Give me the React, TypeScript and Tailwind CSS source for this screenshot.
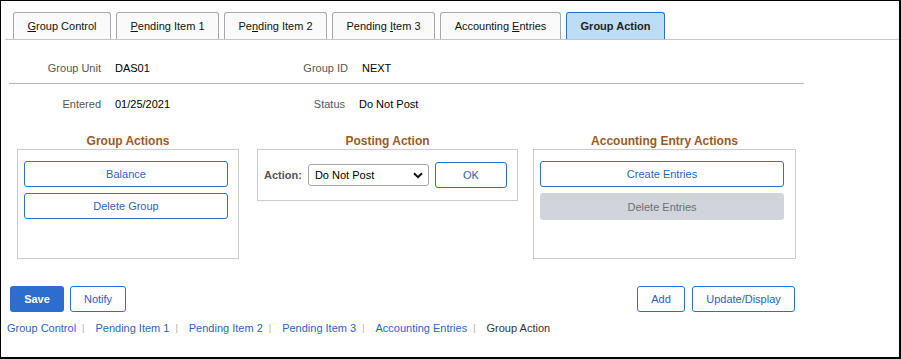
import { FC, ReactNode } from "react";

const tabs: { label: ReactNode; width: string; active?: boolean }[] = [
  { label: <><u>G</u>roup Control</>, width: "w-[98px]" },
  { label: <><u>P</u>ending Item 1</>, width: "w-[103px]" },
  { label: <>Pe<u>n</u>ding Item 2</>, width: "w-[103px]" },
  { label: <>Pending <u>I</u>tem 3</>, width: "w-[103px]" },
  { label: <>Accounting <u>E</u>ntries</>, width: "w-[121px]" },
  { label: <>Group Action</>, width: "w-[99px]", active: true },
];

const links = ["Group Control", "Pending Item 1", "Pending Item 2", "Pending Item 3", "Accounting Entries"];

const OutlineButton: FC<{ children: ReactNode; className?: string }> = ({ children, className }) => (
  <button
    className={`flex h-[26px] items-center justify-center rounded-[3px] border border-[#2b6ecd] bg-white text-[11px] text-[#2a63b8] ${className ?? ""}`}
  >
    {children}
  </button>
);

const Field: FC<{ label: string; value: string; labelW: string; valueW?: string }> = ({ label, value, labelW, valueW }) => (
  <>
    <div className={`${labelW} text-right text-[#555]`}>{label}</div>
    <div className={`ml-[14px] ${valueW ?? ""} text-black`}>{value}</div>
  </>
);

const App: FC = () => {
  return (
    <div
      className="h-[359px] w-[901px] overflow-hidden border-t border-l border-r-2 border-b-2 border-black bg-white text-[11px] leading-[14px]"
      style={{ fontFamily: '"Liberation Sans", Arial, sans-serif' }}
    >
      {/* tabs */}
      <div className="ml-[4px] flex gap-[5px] border-b border-[#c6c6c6] pl-[8px] pt-[11px]">
        {tabs.map((tab, i) => (
          <div
            key={i}
            className={`flex h-[27px] items-center justify-center rounded-t-[3px] border border-b-0 ${tab.width} ${
              tab.active
                ? "border-[#2b6ecd] bg-[#bddcf6] font-bold text-[#222]"
                : "border-[#a8a8a8] bg-[#fafafa] text-[#111]"
            }`}
          >
            <span>{tab.label}</span>
          </div>
        ))}
      </div>

      {/* header fields */}
      <div className="mt-[21px] flex h-[14px] items-center">
        <Field label="Group Unit" value="DAS01" labelW="w-[100px]" valueW="w-[120px]" />
        <Field label="Group ID" value="NEXT" labelW="w-[113px]" />
      </div>
      <div className="mt-[8px] ml-[8px] h-px w-[795px] bg-[#b4b4b4]" />
      <div className="mt-[13px] flex h-[14px] items-center">
        <Field label="Entered" value="01/25/2021" labelW="w-[100px]" valueW="w-[120px]" />
        <Field label="Status" value="Do Not Post" labelW="w-[110px]" />
      </div>

      {/* action groups */}
      <div className="mt-[23px] flex items-start pl-[16px]">
        <div className="flex w-[222px] flex-col">
          <div className="h-[15px] text-center text-[12px] font-bold text-[#9b5a1f]">Group Actions</div>
          <div className="flex h-[110px] flex-col gap-[6px] border border-[#cbcbcb] pl-[6px] pt-[11px]">
            <OutlineButton className="w-[204px]">Balance</OutlineButton>
            <OutlineButton className="w-[204px]">Delete Group</OutlineButton>
          </div>
        </div>

        <div className="ml-[18px] flex w-[261px] flex-col">
          <div className="h-[15px] text-center text-[12px] font-bold text-[#9b5a1f]">Posting Action</div>
          <div className="flex h-[52px] items-center border border-[#cbcbcb] pl-[6px]">
            <span className="text-[11px] font-bold text-[#555]">Action:</span>
            <div className="ml-[6px] flex h-[22px] w-[121px] items-center justify-between rounded-[3px] border border-[#a6a6a6] bg-white pl-[6px] pr-[5px] text-black">
              <span>Do Not Post</span>
              <svg width="10" height="7" viewBox="0 0 10 7">
                <path d="M1 1.2 5 5.2 9 1.2" fill="none" stroke="#111" strokeWidth="2" />
              </svg>
            </div>
            <OutlineButton className="ml-[6px] w-[72px]">OK</OutlineButton>
          </div>
        </div>

        <div className="ml-[15px] flex w-[263px] flex-col">
          <div className="h-[15px] text-center text-[12px] font-bold text-[#9b5a1f]">Accounting Entry Actions</div>
          <div className="flex h-[110px] flex-col gap-[6px] border border-[#cbcbcb] pl-[6px] pt-[11px]">
            <OutlineButton className="w-[244px]">Create Entries</OutlineButton>
            <button className="flex h-[27px] w-[244px] items-center justify-center rounded-[3px] bg-[#d1d5db] text-[11px] text-[#6f6f6f]">
              Delete Entries
            </button>
          </div>
        </div>
      </div>

      {/* page buttons */}
      <div className="mt-[27px] flex w-[794px] items-center justify-between pl-[9px]">
        <div className="flex gap-[6px]">
          <button className="flex h-[26px] w-[54px] items-center justify-center rounded-[3px] bg-[#2b6ecd] text-[11px] font-bold text-white">
            Save
          </button>
          <OutlineButton className="w-[56px]">Notify</OutlineButton>
        </div>
        <div className="flex gap-[7px]">
          <OutlineButton className="w-[48px]">Add</OutlineButton>
          <OutlineButton className="w-[103px]">Update/Display</OutlineButton>
        </div>
      </div>

      {/* footer links */}
      <div className="mt-[9px] flex items-center pl-[6px]">
        {links.map((l) => (
          <span key={l} className="flex items-center">
            <span className="text-[#2a66c0]">{l}</span>
            <span className="ml-[6px] mr-[11px] text-[9px] text-[#aaa]">|</span>
          </span>
        ))}
        <span className="text-[#333]">Group Action</span>
      </div>
    </div>
  );
};

export default App;
